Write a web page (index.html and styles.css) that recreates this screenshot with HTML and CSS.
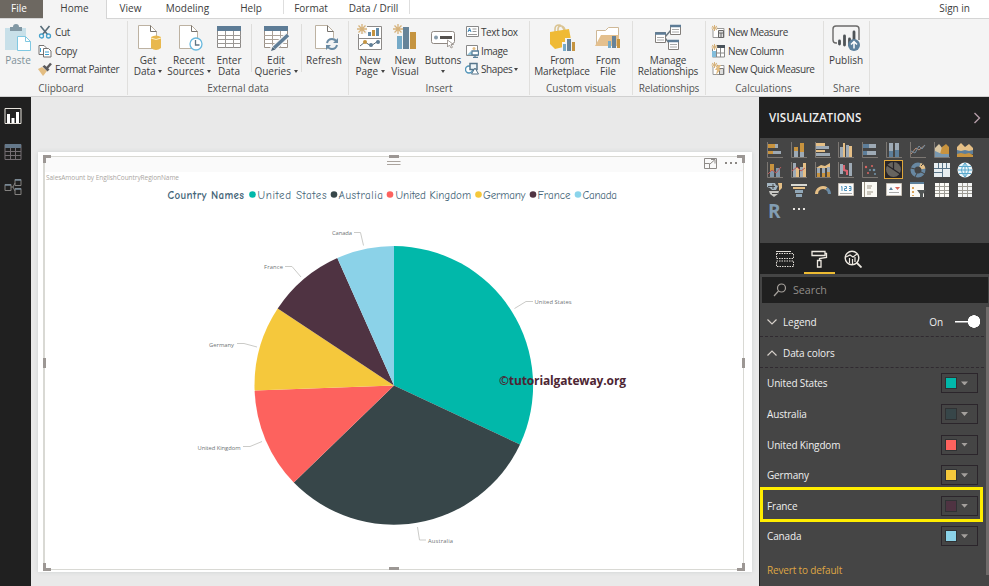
FILE: index.html
```html
<!DOCTYPE html>
<html lang="en">
<head>
<meta charset="utf-8">
<title>Report editor</title>
<link rel="stylesheet" href="styles.css">
</head>
<body>
<div class="app">
  <nav class="tabs">
    <span class="tab file">File</span>
    <span class="tab home">Home</span>
    <span class="tab view">View</span>
    <span class="tab modeling">Modeling</span>
    <span class="tab help">Help</span>
    <span class="tab format">Format</span>
    <span class="tab drill">Data / Drill</span>
    <span class="signin">Sign in</span>
  </nav>

  <div class="ribbon">
    <section class="group clipboard">
      <div class="tools">
        <div class="big paste">
          <svg width="28" height="28" viewBox="0 0 28 28"><path fill="#c8e0e9" d="M1 4h21v22H1z"/><path fill="#8298a4" d="M6 3h3a3 3 0 0 1 6 0h3v4H6z"/><path fill="#fff" stroke="#80c8e2" d="M13.500 12.500h8l5 5v9h-13z"/><path fill="none" stroke="#80c8e2" d="M21.500 12.500v5h5"/></svg>
          <span>Paste</span>
        </div>
        <div class="list">
          <div class="small"><svg width="14" height="14" viewBox="0 0 14 14" fill="none"><path stroke="#566b78" stroke-width="1.600" d="M2.500 1l7 8.500M11.500 1l-7 8.500"/><circle cx="3.500" cy="11" r="2" stroke="#45a2cc" stroke-width="1.300"/><circle cx="10.500" cy="11" r="2" stroke="#45a2cc" stroke-width="1.300"/></svg>Cut</div>
          <div class="small"><svg width="14" height="14" viewBox="0 0 14 14" fill="#fff" stroke="#74716f"><path d="M1 1.500h5l2 2v7H1z"/><path d="M5.500 4.500h5l2.500 2.500v6H5.500z"/><path stroke="#3ba0cf" d="M2.500 4v4M7 8h4M7 10.500h4"/></svg>Copy</div>
          <div class="small"><svg width="14" height="14" viewBox="0 0 14 14"><path fill="#e3bd82" d="M0 7l4-2 5 4-4 5z"/><path fill="#5b5a5c" d="M4.500 4.500l2-1.500 5 4.500-2 2z"/><path stroke="#5b5a5c" stroke-width="2.500" d="M9 6l4-4.500"/></svg>Format Painter</div>
        </div>
      </div>
      <div class="caption">Clipboard</div>
    </section>

    <section class="group external">
      <div class="tools">
        <div class="big w34"><svg class="nudge" width="26" height="28" viewBox="0 0 26 28"><path fill="#fff" stroke="#bdb2a2" d="M1.500 1.500h12l6 6v17h-18z"/><path fill="none" stroke="#77736e" d="M13.500 1.500v6h6"/><path fill="#e8b84e" d="M14 13q5-3 10 0v11q-5 4-10 0z"/><path fill="none" stroke="#fff0c6" d="M14 14q5 3 10 0"/></svg><span>Get</span><span>Data <i class="caret"></i></span></div>
        <div class="big w48"><svg class="nudge" width="26" height="28" viewBox="0 0 26 28"><path fill="#fff" stroke="#bdb2a2" d="M1.500 1.500h12l6 6v17h-18z"/><path fill="none" stroke="#77736e" d="M13.500 1.500v6h6"/><circle cx="18" cy="20" r="6" fill="#fff" stroke="#69b9de" stroke-width="1.300"/><path fill="none" stroke="#607786" stroke-width="1.300" d="M17.500 16v5h4"/></svg><span>Recent</span><span>Sources <i class="caret"></i></span></div>
        <div class="big w32"><svg width="26" height="28" viewBox="0 0 26 28"><path fill="#fff" stroke="#8d8a88" d="M1.500 2.500h23v21h-23z"/><path fill="#5d7c96" d="M1 2h24v5H1z"/><path stroke="#9b9895" d="M1 11.500h24M1 15.500h24M1 19.500h24M9.500 7v17M17.500 7v17"/></svg><span>Enter</span><span>Data</span></div>
        <i class="rule one"></i>
        <div class="big w44"><svg width="28" height="28" viewBox="0 0 28 28"><path fill="#fff" stroke="#9a9087" d="M2.500 2.500h23v21h-23z"/><path fill="#5d7c96" d="M2 2h24v5H2z"/><path stroke="#aaa198" d="M2 11.500h24M2 15.500h24M2 19.500h24M10.500 7v17M18.500 7v17"/><path stroke="#f4f4f4" stroke-width="6" d="M10 26L26 11"/><path stroke="#607e97" stroke-width="3.500" d="M12 24L26 11"/><path fill="#4e6577" d="M9 27l1.500-4 3 2.500z"/></svg><span>Edit</span><span>Queries <i class="caret"></i></span></div>
        <i class="rule two"></i>
        <div class="big w38"><svg width="28" height="28" viewBox="0 0 28 28"><path fill="#fff" stroke="#bdb2a2" d="M5.500 1.500h12l6 6v17h-18z"/><path fill="none" stroke="#77736e" d="M17.500 1.500v6h6"/><circle cx="22" cy="20" r="6.500" fill="#f4f4f4"/><path fill="none" stroke="#6a8ba4" stroke-width="2" d="M17 19q1-4 5-4 3 0 5 3M27 21q-1 4-5 4-3 0-5-3"/><path fill="#6a8ba4" d="M28 14v5h-5zM16 26v-5h5z"/></svg><span>Refresh</span></div>
      </div>
      <div class="caption">External data</div>
    </section>

    <section class="group insert">
      <div class="tools">
        <div class="big w36"><svg width="28" height="28" viewBox="0 0 28 28"><path fill="#fff" stroke="#8d8a88" d="M2.500 2.500h23v23h-23zM3 14.500h22"/><path fill="#f4f4f4" d="M1 1h10v9H1z"/><path stroke="#d6b27b" stroke-width="1.300" d="M6 0v10M1 5h10M2.500 1.500l7 7M9.500 1.500l-7 7"/><path fill="#638ba8" d="M12 8h3v4h-3zM20 4h3v8h-3z"/><path fill="#c59440" d="M16 6h3v6h-3z"/><path fill="none" stroke="#5a6a74" d="M4 22l5-4 6 4 7-5"/><circle cx="9" cy="18" r="2" fill="#c59440"/><circle cx="15" cy="21" r="2" fill="#5f7e96"/><circle cx="22" cy="18" r="2" fill="#5f7e96"/></svg><span>New</span><span>Page <i class="caret"></i></span></div>
        <div class="big w34"><svg width="26" height="28" viewBox="0 0 26 28"><path stroke="#d6b27b" stroke-width="1.300" d="M6 0v10M1 5h10M2.500 1.500l7 7M9.500 1.500l-7 7"/><path fill="#75aac8" d="M5 12h5v13H5z"/><path fill="#668399" d="M11 3h6v22h-6z"/><path fill="#c59440" d="M18 8h6v17h-6z"/></svg><span>New</span><span>Visual</span></div>
        <div class="big w42"><svg width="26" height="28" viewBox="0 0 26 28"><rect x="1.500" y="7.500" width="23" height="12" rx="2" fill="#fff" stroke="#8f8882"/><circle cx="6" cy="13.500" r="2" fill="#879cab"/><path stroke="#55514e" stroke-width="3" d="M10 13.500h12"/><path fill="#fff" stroke="#8f8882" stroke-width=".8" d="M17.500 16v7l2-2 1.500 3 1.500-.7-1.500-2.800h2.500z"/></svg><span>Buttons</span><span><i class="caret"></i></span></div>
        <div class="list">
          <div class="small"><svg width="14" height="14" viewBox="0 0 14 14"><path fill="#fff" stroke="#888" d="M1.500 1.500h12v10h-12z"/><path fill="none" stroke="#4388b5" d="M3 7l1.500-4L6 7M3.500 5.500h2"/><path stroke="#999" d="M7.500 4h4M7.500 6.500h4M3 9.500h9"/></svg>Text box</div>
          <div class="small"><svg width="14" height="14" viewBox="0 0 14 14"><path fill="#fff" stroke="#888" d="M1.500 1.500h11v10h-11z"/><path fill="#8fc1d7" d="M2 11l4-4 3 4z"/><circle cx="9" cy="4.500" r="1.500" fill="#e3bd82"/><path fill="#fff" stroke="#587e98" stroke-width="1.300" d="M7 7h6.500v4H7zM10 11v2M8 13.300h5"/></svg>Image</div>
          <div class="small"><svg width="14" height="14" viewBox="0 0 14 14"><circle cx="4" cy="7.500" r="3.500" fill="#fff" stroke="#5395b9" stroke-width="1.400"/><path fill="#edf4f7" stroke="#56758a" stroke-width="1.500" d="M5 1.500h7v6H5z"/><path fill="#fff" stroke="#56758a" d="M10 6l3.500 6h-7z"/></svg>Shapes <i class="caret"></i></div>
        </div>
      </div>
      <div class="caption">Insert</div>
    </section>

    <section class="group custom">
      <div class="tools">
        <div class="big w58"><svg width="28" height="28" viewBox="0 0 28 28"><path fill="none" stroke="#dac493" stroke-width="1.600" d="M7 9V5q0-4 4-4 3 0 5 5M10 8V5q0-3 3-3 3 0 4 4"/><path fill="#efba35" d="M2 8l19-3 3 16-17 4-5-5z"/><path fill="#f4f4f4" d="M14 18h3v-4h10v13H14z"/><path fill="#75aac8" d="M15 20h3v7h-3z"/><path fill="#668399" d="M19 15h4v12h-4z"/><path fill="#c59440" d="M24 18h3v9h-3z"/></svg><span>From</span><span>Marketplace</span></div>
        <div class="big w34"><svg width="28" height="28" viewBox="0 0 28 28"><path fill="#fff" stroke="#cfb896" d="M2.500 21V6.500h9l3-3h10V21z"/><path fill="#e4c08e" d="M1 22l6-11h18v11z"/><path fill="#75aac8" d="M14 17h3v7h-3z"/><path fill="#668399" d="M18 12h4v12h-4z"/><path fill="#c59440" d="M23 15h3v9h-3z"/></svg><span>From</span><span>File</span></div>
      </div>
      <div class="caption">Custom visuals</div>
    </section>

    <section class="group relations">
      <div class="tools">
        <div class="big w70"><svg width="28" height="28" viewBox="0 0 28 28"><path fill="none" stroke="#6b7982" stroke-width="1.500" d="M11 13l6-7M11 14l5 6"/><g fill="#fff" stroke="#827e7a"><path d="M1.500 8.500h10v10h-10zM16.500 1.500h10v9h-10zM14.500 16.500h10v9h-10z"/></g><path stroke="#5d7c96" stroke-width="2.500" d="M1 9.500h11M16 2h11M14 17h11"/><path stroke="#aaa" d="M3 13.500h7M3 16h7M18 5.500h7M18 8h7M16 20.500h7M16 23h7"/></svg><span>Manage</span><span>Relationships</span></div>
      </div>
      <div class="caption">Relationships</div>
    </section>

    <section class="group calc">
      <div class="tools">
        <div class="list">
          <div class="small"><svg width="15" height="14" viewBox="0 0 15 14"><path fill="#fff" stroke="#999" d="M2 5v7.500h11v-9H6"/><path stroke="#d6b27b" d="M3.500 0v6M.5 3h6M1 1l5 4M6 1L1 5"/><path fill="#ddd" stroke="#666" d="M7.500 5.500h5v7h-5zM8 8h4M10 8v4"/></svg>New Measure</div>
          <div class="small"><svg width="15" height="14" viewBox="0 0 15 14"><path fill="#fff" stroke="#888" d="M1.500 5v8h12V2H6M1 9h13M5.500 5v8M9.500 2v11"/><path fill="#48525a" d="M6 1h8v3H6z"/><path fill="#83bddb" d="M1 7h4v6H1z"/><path stroke="#d6b27b" d="M3.500 0v6M.5 3h6M1 1l5 4M6 1L1 5"/></svg>New Column</div>
          <div class="small"><svg width="15" height="14" viewBox="0 0 15 14"><path fill="#fff" stroke="#999" d="M2 5v7.500h11v-9H6"/><path stroke="#d6b27b" d="M3.500 0v6M.5 3h6M1 1l5 4M6 1L1 5"/><path fill="#ddd" stroke="#777" d="M8.500 6.500h4v6h-4z"/><path fill="#e3bd82" d="M7 3h3L8 7h2l-5 6 1-5H4z"/></svg>New Quick Measure</div>
        </div>
      </div>
      <div class="caption">Calculations</div>
    </section>

    <section class="group share">
      <div class="tools">
        <div class="big w44"><svg width="30" height="28" viewBox="0 0 30 28"><path fill="none" stroke="#6b6a69" stroke-width="1.400" d="M6 19H5q-3 0-3-3V5q0-3 3-3h20q3 0 3 3v11"/><path stroke="#4e5357" stroke-width="2.800" stroke-linecap="round" d="M8.500 17v3M13.500 12v9M18.500 15v6M23 8v8"/><circle cx="23" cy="21" r="6" fill="#5d819d"/><path fill="none" stroke="#fff" stroke-width="1.500" d="M23 24.500v-7M20 20.500l3-3 3 3"/></svg><span>Publish</span></div>
      </div>
      <div class="caption">Share</div>
    </section>
  </div>

  <main class="workspace">
    <aside class="rail">
      <svg width="18" height="18" viewBox="0 0 18 18"><path fill="none" stroke="#e7e3dc" d="M1 1.500h16v15H1z"/><path fill="#fff" d="M3 7h3v9H3zM7.500 11h3v5h-3zM12 5h3v11h-3z"/></svg>
      <svg width="18" height="18" viewBox="0 0 18 18"><path fill="none" stroke="#746e73" d="M1 1.500h16v15H1zM1 8.500h16M1 12.500h16M6.500 4v12M11.500 4v12"/><path fill="#64788a" d="M1 1h16v4H1z"/></svg>
      <svg width="18" height="18" viewBox="0 0 18 18"><path fill="none" stroke="#83817f" d="M1 6.500h6v6H1zM11 1.500h6v6h-6zM11 10.500h6v6h-6zM7 9h2l2-4M9 9l2 4"/><path stroke="#788b9b" stroke-width="1.500" d="M1 7h6M11 2h6M11 11h6"/></svg>
    </aside>

    <div class="canvas">
      <div class="page">
        <div class="visual">
          <svg class="chart" viewBox="45 157 698 412" width="698" height="412">
            <rect x="45" y="157" width="698" height="15" fill="#fafafa"/>
            <text class="subtitle" x="46" y="180" textLength="133">SalesAmount by EnglishCountryRegionName</text>
            <g class="legend">
              <text class="legend-title" x="167.500" y="198.500" textLength="76.500">Country Names</text>
              <circle cx="252.500" cy="194.500" r="3.300" fill="#01b8aa"/><text x="257.500" y="198.500" textLength="69">United States</text>
              <circle cx="334" cy="194.500" r="3.300" fill="#374649"/><text x="338.500" y="198.500" textLength="44.500">Australia</text>
              <circle cx="390" cy="194.500" r="3.300" fill="#fd625e"/><text x="395.500" y="198.500" textLength="75.500">United Kingdom</text>
              <circle cx="478.500" cy="194.500" r="3.300" fill="#f5c83c"/><text x="483" y="198.500" textLength="42.500">Germany</text>
              <circle cx="533" cy="194.500" r="3.300" fill="#4f3342"/><text x="537.500" y="198.500" textLength="33">France</text>
              <circle cx="578" cy="194.500" r="3.300" fill="#8ad4eb"/><text x="582.500" y="198.500" textLength="34.500">Canada</text>
            </g>
            <g>
              <path fill="#01b8aa" d="M394 385.500V246A139.500 139.500 0 0 1 520 444.500z"/>
              <path fill="#374649" d="M394 385.500L520 444.500A139.500 139.500 0 0 1 293.800 482.500z"/>
              <path fill="#fd625e" d="M394 385.500L293.800 482.500A139.500 139.500 0 0 1 254.600 390.500z"/>
              <path fill="#f5c83c" d="M394 385.500L254.600 390.500A139.500 139.500 0 0 1 277.700 308.600z"/>
              <path fill="#4f3342" d="M394 385.500L277.700 308.600A139.500 139.500 0 0 1 337.300 258z"/>
              <path fill="#8bd2e8" d="M394 385.500L337.300 258A139.500 139.500 0 0 1 394 246z"/>
            </g>
            <path class="leader" d="M354 232.500h6.500l3 13M285 266.500h7l9 10.500M237 343.500h7l13 3.500M243 446.500h7l12-5M514.500 308.500l11.500-7h7M417.500 527l2 13h6.500"/>
            <g class="labels">
              <text x="332" y="235" textLength="20">Canada</text>
              <text x="264" y="269" textLength="19">France</text>
              <text x="209" y="346.500" textLength="25">Germany</text>
              <text x="197.500" y="449.500" textLength="43">United Kingdom</text>
              <text x="534.500" y="304" textLength="37">United States</text>
              <text x="428" y="543" textLength="25">Australia</text>
            </g>
            <text class="watermark" x="499" y="385" textLength="127">©tutorialgateway.org</text>
            <path stroke="#aaa39d" stroke-width="1.200" d="M387 161.500h13.500M387 164.500h13.500"/>
            <path fill="none" stroke="#8e8b88" d="M704.500 158.500h12v10h-12zM704.500 163.500h5v5M710 164l4.500-4M711 159.500h4v4"/>
            <path fill="#8b8784" d="M725 162h2v2h-2zM730 162h2v2h-2zM735 162h2v2h-2z"/>
          </svg>
          <i class="handle tl"></i><i class="handle tc"></i><i class="handle tr"></i>
          <i class="handle ml"></i><i class="handle mr"></i>
          <i class="handle bl"></i><i class="handle bc"></i><i class="handle br"></i>
        </div>
      </div>
    </div>

    <aside class="pane">
      <header class="pane-head"><span>VISUALIZATIONS</span><svg width="8" height="12" viewBox="0 0 8 12"><path fill="none" stroke="#b49da8" stroke-width="1.400" d="M1.500 1l5 5-5 5"/></svg></header>

      <div class="gallery">
        <svg viewBox="0 0 16 16"><path class="axis" d="M.5 0v15.500H16"/><path fill="#c8933e" d="M1 2h7v4H1zM1 9h5v3H1z"/><path fill="#9eaab5" d="M8 2h3v4H8zM6 9h8v3H6z"/></svg>
        <svg viewBox="0 0 16 16"><path class="axis" d="M.5 0v15.500H16"/><path fill="#c8933e" d="M3 5h4v4H3zM9 1h4v9H9z"/><path fill="#9eaab5" d="M3 9h4v6H3zM9 10h4v5H9z"/></svg>
        <svg viewBox="0 0 16 16"><path class="axis" d="M.5 0v15.500H16"/><path fill="#e5bf86" d="M1 1h9v3H1zM1 8h9v2H1z"/><path fill="#9eaab5" d="M1 4h13v3H1zM1 11h14v3H1z"/></svg>
        <svg viewBox="0 0 16 16"><path class="axis" d="M.5 0v15.500H16"/><path fill="#9eaab5" d="M2 5h3v10H2zM8 3h3v12H8z"/><path fill="#e5bf86" d="M5 1h2v14H5zM11 4h3v11h-3z"/></svg>
        <svg viewBox="0 0 16 16"><path class="axis" d="M.5 0v15.500H16"/><path fill="#5d7e9a" d="M1 2h6v4H1zM1 9h4v4H1z"/><path fill="#9eaab5" d="M7 2h7v4H7zM5 9h9v4H5z"/></svg>
        <svg viewBox="0 0 16 16"><path class="axis" d="M.5 0v15.500H16"/><path fill="#9eaab5" d="M3 1h4v8H3zM9 1h4v7H9z"/><path fill="#5d7e9a" d="M3 9h4v6H3zM9 8h4v7H9z"/></svg>
        <svg viewBox="0 0 16 16"><path class="axis" d="M.5 0v15.500H16"/><path fill="none" stroke="#b99079" d="M1 12l5-6 3 2 6-5"/><path fill="none" stroke="#748b9d" d="M1 9l4 2 4-7 3 3 3-4"/></svg>
        <svg viewBox="0 0 16 16"><path class="axis" d="M.5 0v15.500H16"/><path fill="#d9c7a4" d="M1 15V6l4-4 4 5v8z"/><path fill="#c8933e" d="M6 12l2-7 4-3 3 3v8z"/><path fill="#7998af" d="M1 9l7 3h7v3H1z"/></svg>
        <svg viewBox="0 0 16 16"><path fill="#e5bf86" d="M0 5l4-4 4 4 4-3 4 4v4H0z"/><path fill="#5d7e9a" d="M0 8l4 1 4-1 4 1 4-1v4H0z"/><path fill="#c8933e" d="M0 15v-3l4-1 4 1 4-1 4 2v2z"/></svg>

        <svg viewBox="0 0 16 16"><path class="axis" d="M.5 0v15.500H16"/><path fill="#c8933e" d="M3 2h4v13H3z"/><path fill="#8397a8" d="M3 9h4v6H3zM9 6h4v9H9z"/><path fill="none" stroke="#b9585a" d="M1 12l4-4 4 3 5-6"/></svg>
        <svg viewBox="0 0 16 16"><path class="axis" d="M.5 0v15.500H16"/><path fill="#9eaab5" d="M2 1h3v14H2zM9 5h3v10H9z"/><path fill="#e5bf86" d="M5 6h3v9H5zM12 1h3v14h-3z"/><path fill="none" stroke="#b9585a" d="M1 9l5-4 4 4 4-3"/></svg>
        <svg viewBox="0 0 16 16"><path class="axis" d="M.5 0v15.500H16"/><path fill="#e5bf86" d="M1 6l5-3 4 1 5-3v5H1z"/><path fill="#9eaab5" d="M2 6h3v5H2zM7 6h3v5H7zM12 5h3v6h-3z"/><path fill="#c8933e" d="M2 11h3v4H2zM7 11h3v4H7zM12 10h3v5h-3z"/></svg>
        <svg viewBox="0 0 16 16"><path class="axis" d="M.5 0v15.500H16"/><path fill="#9eaab5" d="M2 2h3v10H2zM11 1h3v13h-3z"/><path fill="none" stroke="#dc6470" stroke-width="2" d="M6 3v5l3 1v4"/></svg>
        <svg viewBox="0 0 16 16"><path class="axis" d="M.5 0v15.500H16"/><g fill="#db6662"><circle cx="4" cy="5" r="1.200"/><circle cx="10" cy="4" r="1"/><circle cx="6" cy="11" r="1"/></g><g fill="#7594aa"><circle cx="12" cy="8" r="1.300"/><circle cx="8" cy="8" r="1"/><circle cx="13" cy="12" r="1"/></g></svg>
        <svg class="picked" viewBox="0 0 16 16"><circle cx="8" cy="8" r="7" fill="#67645f"/><path fill="none" stroke="#282528" stroke-width="1.200" d="M8 1v7l6 4M8 8L2 4"/></svg>
        <svg viewBox="0 0 16 16"><circle cx="8" cy="8" r="5.500" fill="none" stroke="#6888a2" stroke-width="4"/><path fill="none" stroke="#e5bf86" stroke-width="4" d="M10 2.800q3 1 3.500 4"/><path stroke="#454545" d="M1 6l4 1M11 4l3-3M7 11l-2 4M11 10l4 2"/></svg>
        <svg viewBox="0 0 16 16"><path fill="#e8eef0" d="M0 1h16v14H0z"/><path stroke="#587487" d="M0 6.500h16M0 10.500h8M8.500 1v14M4.500 1v5M12.500 1v5"/></svg>
        <svg viewBox="0 0 16 16"><circle cx="8" cy="8" r="7.500" fill="#eef7fb"/><path fill="none" stroke="#58a8cc" d="M1 8h14M8 1v14M2 4.500h12M2 11.500h12M8 1q-7 7 0 14M8 1q7 7 0 14"/></svg>

        <svg viewBox="0 0 16 16"><path fill="#a4b5c1" d="M0 1h8l1 2 2 1-2 4H5L3 6 0 5z"/><path fill="#e5bf86" d="M11 1h4v5l-3 3V5z"/><path fill="#c8c7c3" d="M2 9h10l-1 3-4 3-4-3z"/><path stroke="#454545" d="M1 4.500h7M6 2v5M5 11.500h6"/></svg>
        <svg viewBox="0 0 16 16"><path fill="#d8d8d2" d="M0 2h16v2H0z"/><path fill="#e5bf86" d="M2 5h12v2H2z"/><path fill="#91a7b7" d="M4 8h8v3H4zM5 12h6v3H5z"/></svg>
        <svg viewBox="0 0 16 16"><path fill="none" stroke="#e5bf86" stroke-width="3" d="M1.500 12a6.500 6.500 0 0 1 10-5.500"/><path fill="none" stroke="#6d8ca5" stroke-width="3" d="M11.500 6.500q3 2 3 5.500"/></svg>
        <svg viewBox="0 0 16 16"><path fill="#fbfbfb" stroke="#c8c1b7" d="M.5 1.500h15v12H.5z"/><path fill="none" stroke="#4b8fb9" d="M3 5l1-.5V9M6.500 4.500h2v2h-2v2h2.500M11 4.500h2v4h-2M11 6.500h2"/><path stroke="#aaa" d="M2 11.500h12"/></svg>
        <svg viewBox="0 0 16 16"><path fill="#faf9f4" d="M0 0h15v15H0z"/><path stroke="#9d9687" d="M2.500 0v15M5 4h5M5 6h4M5 10h6M5 12h4"/></svg>
        <svg viewBox="0 0 16 16"><path fill="#fbfbfb" stroke="#c8c1b7" d="M.5 1.500h15v12H.5z"/><path fill="#5c7f99" d="M3 8l2-3 2 3z"/><path fill="#da6558" d="M9 5h5l-2.500 3z"/><path stroke="#aaa" d="M3 10.500h10"/></svg>
        <svg viewBox="0 0 16 16"><path fill="#faf9f4" d="M0 0h14v15H0z"/><path fill="#5b7f9a" d="M0 0h14v2H0z"/><path stroke="#d9a35a" stroke-width="2" d="M3 5v9" stroke-dasharray="2 2"/><path fill="#515555" d="M7 8h9l-3 4v4l-3-1v-3z"/></svg>
        <svg viewBox="0 0 16 16"><path fill="#fbfaf6" d="M1 1h14v14H1z"/><path stroke="#9d9b94" d="M1 4.500h14M1 8.500h14M1 11.500h14M5.500 1v14M10.500 1v14"/></svg>
        <svg viewBox="0 0 16 16"><path fill="#f4f5f5" d="M1 1h14v14H1z"/><path stroke="#9d9b94" d="M1 4.500h14M1 8.500h14M1 11.500h14M5.500 1v14M10.500 1v14"/></svg>
        <span class="r">R</span>
        <svg viewBox="0 0 16 16"><path fill="#e5e2de" d="M2 5h2v2H2zM7 5h2v2H7zM12 5h2v2h-2z"/></svg>
      </div>

      <div class="pane-tabs">
        <span class="pane-tab"><svg width="18" height="18" viewBox="0 0 18 18"><path fill="none" stroke="#e1ddd7" stroke-dasharray="1.500 1" d="M.5 3.500h17v5H.5zM.5 11h17v5.500H.5z"/><path stroke="#e1ddd7" d="M0 1.500h15"/></svg></span>
        <span class="pane-tab active"><svg width="18" height="18" viewBox="0 0 18 18"><path fill="none" stroke="#eee9e1" stroke-width="1.300" d="M2 1.500h13v4H2zM15 3.500h1.500v4l-7 1v2M7.500 10.500h3.500v6.500H7.500z"/></svg></span>
        <span class="pane-tab"><svg width="18" height="18" viewBox="0 0 18 18"><circle cx="8" cy="8" r="6.800" fill="none" stroke="#eee9e1" stroke-width="1.400"/><path fill="none" stroke="#eee9e1" stroke-width="1.200" d="M2 7l4-2 3 2 4-3M5.500 8v5M8.500 9v5M11 7v5"/><path stroke="#eee9e1" stroke-width="1.800" d="M12.500 12.500l5 5"/></svg></span>
      </div>

      <div class="search"><svg width="14" height="14" viewBox="0 0 14 14"><circle cx="8.500" cy="5" r="4" fill="none" stroke="#a6a19c" stroke-width="1.200"/><path stroke="#a6a19c" stroke-width="1.200" d="M5.500 8L1 13"/></svg>Search</div>

      <div class="props">
        <div class="head-row"><svg width="10" height="6" viewBox="0 0 10 6"><path d="M.5.500L5 5 9.500.500"/></svg><span>Legend</span><span class="state">On</span><i class="toggle"></i></div>
        <div class="head-row"><svg width="10" height="6" viewBox="0 0 10 6"><path d="M.5 5.500L5 1l4.500 4.500"/></svg><span>Data colors</span></div>
        <div class="color-row">United States<span class="picker"><i class="swatch teal"></i><i class="drop"></i></span></div>
        <div class="color-row">Australia<span class="picker"><i class="swatch slate"></i><i class="drop"></i></span></div>
        <div class="color-row">United Kingdom<span class="picker"><i class="swatch red"></i><i class="drop"></i></span></div>
        <div class="color-row">Germany<span class="picker"><i class="swatch gold"></i><i class="drop"></i></span></div>
        <div class="color-row marked">France<span class="picker"><i class="swatch plum"></i><i class="drop"></i></span></div>
        <div class="color-row">Canada<span class="picker"><i class="swatch sky"></i><i class="drop"></i></span></div>
        <div class="revert">Revert to default</div>
        <i class="scrollbar"></i>
      </div>
    </aside>
  </main>
</div>
</body>
</html>
```
FILE: styles.css
```css
*, *::after { box-sizing: border-box; }
body { margin: 0; overflow: hidden; font-family: "Segoe UI", "Open Sans", "Noto Sans", sans-serif; font-size: 10px; color: #3c3c3c; }
svg { display: block; flex: none; }
.app { width: 989px; height: 586px; display: flex; flex-direction: column; }

.tabs { display: flex; height: 19px; background: #fff; border-bottom: 1px solid #d5d5d5; line-height: 17px; }
.tab { text-align: center; white-space: nowrap; }
.file { width: 43px; background: #6d6861; color: #fff; padding-right: 5px; }
.home { width: 64px; height: 19px; background: #f4f4f4; border-right: 1px solid #d5d5d5; }
.view { width: 47px; }
.modeling { width: 67px; }
.help { width: 62px; padding-right: 2px; }
.format { width: 55px; border-left: 1px solid #dedede; height: 14px; }
.drill { width: 72px; border-right: 1px solid #dedede; height: 14px; }
.signin { margin-left: auto; margin-right: 19px; }

.ribbon { display: flex; height: 78px; background: #f4f4f4; border-bottom: 1px solid #d0d0d0; padding-top: 2px; }
.group { display: flex; flex-direction: column; border-right: 1px solid #e0dfdd; height: 74px; flex: none; }
.tools { display: flex; height: 62px; padding: 3px 0 0 3px; }
.caption { text-align: center; line-height: 14px; white-space: nowrap; color: #555; }
.clipboard { width: 128px; }
.clipboard .tools { padding-left: 0; }
.clipboard .caption { padding-right: 5px; }
.external { width: 221px; }
.insert { width: 181px; }
.custom { width: 103px; }
.relations { width: 73px; letter-spacing: -0.15px; }
.relations .tools { padding-left: 0; }
.calc { width: 118px; }
.calc .caption { padding-right: 2px; }
.share { width: 46px; }
.share .tools { padding-left: 0; }
.big { display: flex; flex-direction: column; align-items: center; flex: none; text-align: center; white-space: nowrap; line-height: 11px; }
.big svg { margin-bottom: 3px; }
.big span { display: block; height: 11px; }
.nudge { transform: translateX(2px); }
.paste { width: 36px; color: #7d9199; }
.w32 { width: 32px; } .w34 { width: 34px; } .w36 { width: 36px; } .w38 { width: 38px; } .w42 { width: 42px; }
.w44 { width: 44px; } .w48 { width: 48px; } .w58 { width: 58px; letter-spacing: -0.2px; } .w70 { width: 70px; }
.caret { display: inline-block; border: 2.5px solid transparent; border-top: 3px solid #444; border-bottom: 0; vertical-align: 2px; }
.rule { width: 1px; height: 48px; background: #dedddb; flex: none; }
.one { margin: 0 2px 0 6px; }
.two { margin: 0 3px 0 3px; }
.list { display: flex; flex-direction: column; margin-top: -1.5px; padding-left: 2px; letter-spacing: -0.4px; }
.insert .list { padding-left: 1px; }
.small { display: flex; align-items: center; gap: 3px; height: 18.7px; flex: none; white-space: nowrap; }
.insert .small { gap: 2px; }
.calc .list { padding-left: 2px; letter-spacing: -0.4px; }
.calc .small { gap: 2px; }

.workspace { display: flex; height: 489px; }
.rail { width: 31px; background: #202020; display: flex; flex-direction: column; align-items: center; gap: 17.5px; padding: 10px 5px 0 0; }
.canvas { width: 728px; background: #e9e9e9; padding: 55px 7px 14px; }
.page { width: 714px; height: 420px; background: #fff; padding: 4px 8px 2px 5px; box-shadow: 0 0 4px #ccd0d0; }
.visual { position: relative; width: 701px; height: 414px; border: 1px solid #d9d9d4; border-left-width: 2px; }
.handle { position: absolute; background: #9c9794; width: 10px; height: 3px; }
.tc { left: 344px; top: -2px; }
.bc { left: 344px; bottom: -1px; }
.ml, .mr { width: 3px; height: 10px; top: 201px; background: #9c9794; }
.ml { left: -2px; }
.mr { right: -2px; }
.tl, .tr, .bl, .br { width: 8px; height: 8px; background: none; border: 0 solid #9c9794; }
.tl { left: -2px; top: -2px; border-width: 3px 0 0 3px; }
.tr { right: -2px; top: -2px; border-width: 3px 3px 0 0; }
.bl { left: -2px; bottom: -2px; border-width: 0 0 3px 3px; }
.br { right: -2px; bottom: -2px; border-width: 0 3px 3px 0; }
.subtitle { font-size: 6.5px; fill: #aaa69f; }
.legend { font-family: "Comic Sans MS", "Comic Neue", Lato, sans-serif; font-size: 11px; fill: #456578; }
.legend-title { font-weight: bold; }
.leader { fill: none; stroke: #cbcbc8; }
.labels { font-size: 5.8px; fill: #6e7375; }
.watermark { font-family: "Open Sans", sans-serif; font-weight: bold; font-size: 12px; fill: #4d2633; }

.pane { width: 230px; background: #454545; color: #efefef; border-left: 1px solid #242424; display: flex; flex-direction: column; }
.pane-head { height: 41px; background: #202020; display: flex; align-items: center; justify-content: space-between; padding: 0 8px 0 9px; font-size: 11.6px; font-weight: 600; }
.gallery { height: 105px; padding: 4px 0 0 7px; display: grid; grid-template-columns: repeat(9, 23.8px); grid-template-rows: repeat(4, 20.2px); align-content: start; }
.gallery svg { width: 16px; height: 16px; }
.gallery .picked { width: 19px; height: 19px; margin: -2px 0 0 -2px; border: 1.5px solid #dfa73a; background: #282528; }
.gallery .axis { fill: none; stroke: #7c7772; }
.r { font: 700 19px/17px "Open Sans", sans-serif; color: #829db2; padding-left: 1px; }
.pane-tabs { height: 31px; background: #202020; display: flex; padding-left: 10px; gap: 3px; }
.pane-tab { width: 31px; height: 31px; padding: 7px 6px 0; }
.active { border-bottom: 2px solid #edbb32; }
.search { height: 26px; margin: 3px 1px 3px 2px; background: #202020; color: #918d8a; display: flex; align-items: center; padding: 0 0 1px 11px; gap: 6px; font-size: 10.7px; }
.props { position: relative; height: 280px; font-size: 10px; }
.head-row { height: 30.8px; border-bottom: 1px dashed #302a30; display: flex; align-items: center; padding: 2px 8px 0 7px; gap: 6px; letter-spacing: -0.1px; }
.head-row svg { fill: none; stroke: #d6d0ca; stroke-width: 1.2; }
.state { margin-left: auto; margin-right: 6px; }
.toggle { width: 26px; height: 13px; background: radial-gradient(circle at 19px 6.5px, #fff 6px, transparent 6.5px), linear-gradient(#fff, #fff) 0 6px / 16px 1.5px no-repeat; }
.color-row { position: relative; height: 30.6px; display: flex; align-items: center; justify-content: space-between; padding: 1px 11px 0 7px; letter-spacing: -0.15px; }
.picker { width: 37px; height: 20px; border: 1px solid #2b252b; display: flex; align-items: center; padding-left: 3px; gap: 3px; }
.swatch { width: 12px; height: 12px; border: 1px solid #303234; }
.drop { width: 7px; height: 4px; background: #a4a09d; clip-path: polygon(0 0, 100% 0, 50% 100%); margin-left: 1px; }
.teal { background: #01b8aa; }
.slate { background: #374649; }
.red { background: #fd625e; }
.gold { background: #f5c83c; }
.plum { background: #4f3342; }
.sky { background: #8bd2e8; }
.marked::after { content: ""; position: absolute; left: 0; top: -3px; width: 223px; height: 35px; border: 3px solid #ffed00; }
.revert { padding: 9px 7px; color: #dfa644; line-height: 20px; letter-spacing: -0.15px; }
.scrollbar { position: absolute; right: 0; top: 1px; width: 3px; height: 268px; background: #6f6b6a; }
```
